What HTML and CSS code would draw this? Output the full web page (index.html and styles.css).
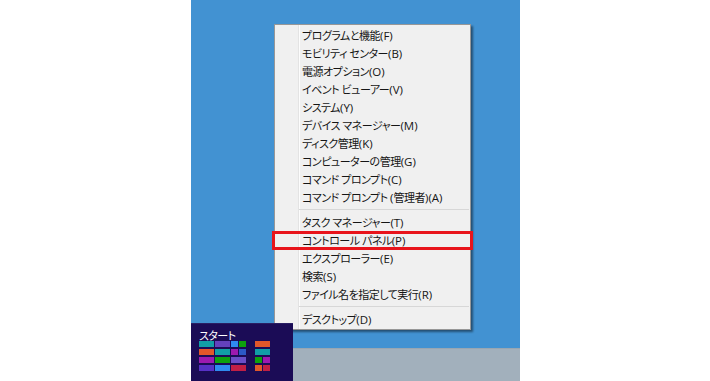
FILE: index.html
```html
<!DOCTYPE html>
<html lang="ja">
<head>
    <meta charset="UTF-8">
    <meta name="viewport" content="width=device-width, initial-scale=1.0">
    <title>Win+X メニュー</title>
    <link rel="stylesheet" href="styles.css">
</head>
<body>
    <div class="desktop">
        <div class="wallpaper"></div>
        <div class="taskbar"></div>

        <ul class="menu">
            <li>プログラムと機能<span class="key">(F)</span></li>
            <li>モビリティ センター<span class="key">(B)</span></li>
            <li>電源オプション<span class="key">(O)</span></li>
            <li>イベント ビューアー<span class="key">(V)</span></li>
            <li>システム<span class="key">(Y)</span></li>
            <li>デバイス マネージャー<span class="key">(M)</span></li>
            <li>ディスク管理<span class="key">(K)</span></li>
            <li>コンピューターの管理<span class="key">(G)</span></li>
            <li>コマンド プロンプト<span class="key">(C)</span></li>
            <li>コマンド プロンプト <span class="key">(</span>管理者<span class="key">)(A)</span></li>
            <li class="sep"></li>
            <li>タスク マネージャー<span class="key">(T)</span></li>
            <li class="marked">コントロール パネル<span class="key">(P)</span></li>
            <li>エクスプローラー<span class="key">(E)</span></li>
            <li>検索<span class="key">(S)</span></li>
            <li>ファイル名を指定して実行<span class="key">(R)</span></li>
            <li class="sep"></li>
            <li>デスクトップ<span class="key">(D)</span></li>
        </ul>

        <div class="start">
            <div class="start-label">スタート</div>
            <div class="tiles">
                <span class="teal"></span>
                <span class="purple"></span>
                <span class="blue"></span>
                <span class="green"></span>
                <span class="orange right w"></span>

                <span class="orange"></span>
                <span class="teal"></span>
                <span class="magenta"></span>
                <span class="navy"></span>
                <span class="teal right w"></span>

                <span class="magenta"></span>
                <span class="green"></span>
                <span class="violet w"></span>
                <span class="green right"></span>
                <span class="magenta"></span>

                <span class="indigo"></span>
                <span class="blue"></span>
                <span class="crimson w"></span>
                <span class="orange right"></span>
                <span class="crimson"></span>
            </div>
        </div>
    </div>
</body>
</html>
```

FILE: styles.css
```css
body {
    margin: 0;
    background: #fff;
    font-family: "Noto Sans CJK JP", "Noto Sans", sans-serif;
}
.desktop {
    position: relative;
    margin-left: 191px;
    width: 329px;
    height: 381px;
    display: flex;
    flex-direction: column;
}
.wallpaper {
    height: 348px;
    background: #4292d2;
}
.taskbar {
    flex: 1;
    background: #a2b0bc;
    border-top: 1px solid #98a6b2;
}

/* context menu */
.menu {
    position: absolute;
    left: 83px;
    top: 24px;
    width: 195px;
    margin: 0;
    padding: 1px 0 1px;
    list-style: none;
    border: 1px solid #979797;
    background: linear-gradient(to right, #f0f0f0 23px, #e3e3e3 23px, #e3e3e3 24px, #fcfcfc 24px, #fcfcfc 25px, #f0f0f0 25px);
    box-shadow: 2px 2px 2px rgba(0,0,0,0.45);
}
.menu li {
    height: 18px;
    line-height: 18px;
    padding-left: 27px;
    font-size: 11px;
    letter-spacing: -0.5px;
    word-spacing: 0.5px;
    color: #151515;
    font-feature-settings: "palt";
    white-space: nowrap;
}
.menu .key {
    font-family: "Open Sans", "Noto Sans", sans-serif;
    font-size: 11.5px;
    letter-spacing: 0;
}
.menu li.sep {
    height: 0;
    margin: 3px 1px 3px 24px;
    padding: 0;
    border-top: 1px solid #d7d7d7;
}
.menu li.marked {
    position: relative;
}
.menu li.marked::after {
    content: "";
    position: absolute;
    top: 0;
    bottom: -1px;
    left: -3px;
    right: -3px;
    border: 3px solid #e8141b;
}

/* start tile */
.start {
    position: absolute;
    left: 0;
    bottom: 0;
    width: 102px;
    height: 58px;
    box-sizing: border-box;
    padding: 5px 0 0 8px;
    background: #1b0c56;
    border-top: 1px solid #2a1e63;
}
.start-label {
    color: #fff;
    font-size: 11px;
    line-height: 12px;
    height: 12px;
    letter-spacing: -0.6px;
    font-feature-settings: "palt";
}
.tiles {
    display: grid;
    grid-template-columns: 15px 15px 7px 7px 7px 7px 7px;
    grid-auto-rows: 6px;
    column-gap: 1px;
    row-gap: 2px;
}
.tiles .w { grid-column-end: span 2; }
.tiles .right { grid-column-start: 6; }
.tiles .right.w { grid-column: 6 / span 2; }
.teal { background: #119ea6; }
.purple { background: #6341bd; }
.blue { background: #2f8bf0; }
.green { background: #0ea10e; }
.orange { background: #e2572a; }
.magenta { background: #9d1ab0; }
.navy { background: #2c58c7; }
.violet { background: #6a4ec8; }
.indigo { background: #5731c6; }
.crimson { background: #c11f45; }
```
